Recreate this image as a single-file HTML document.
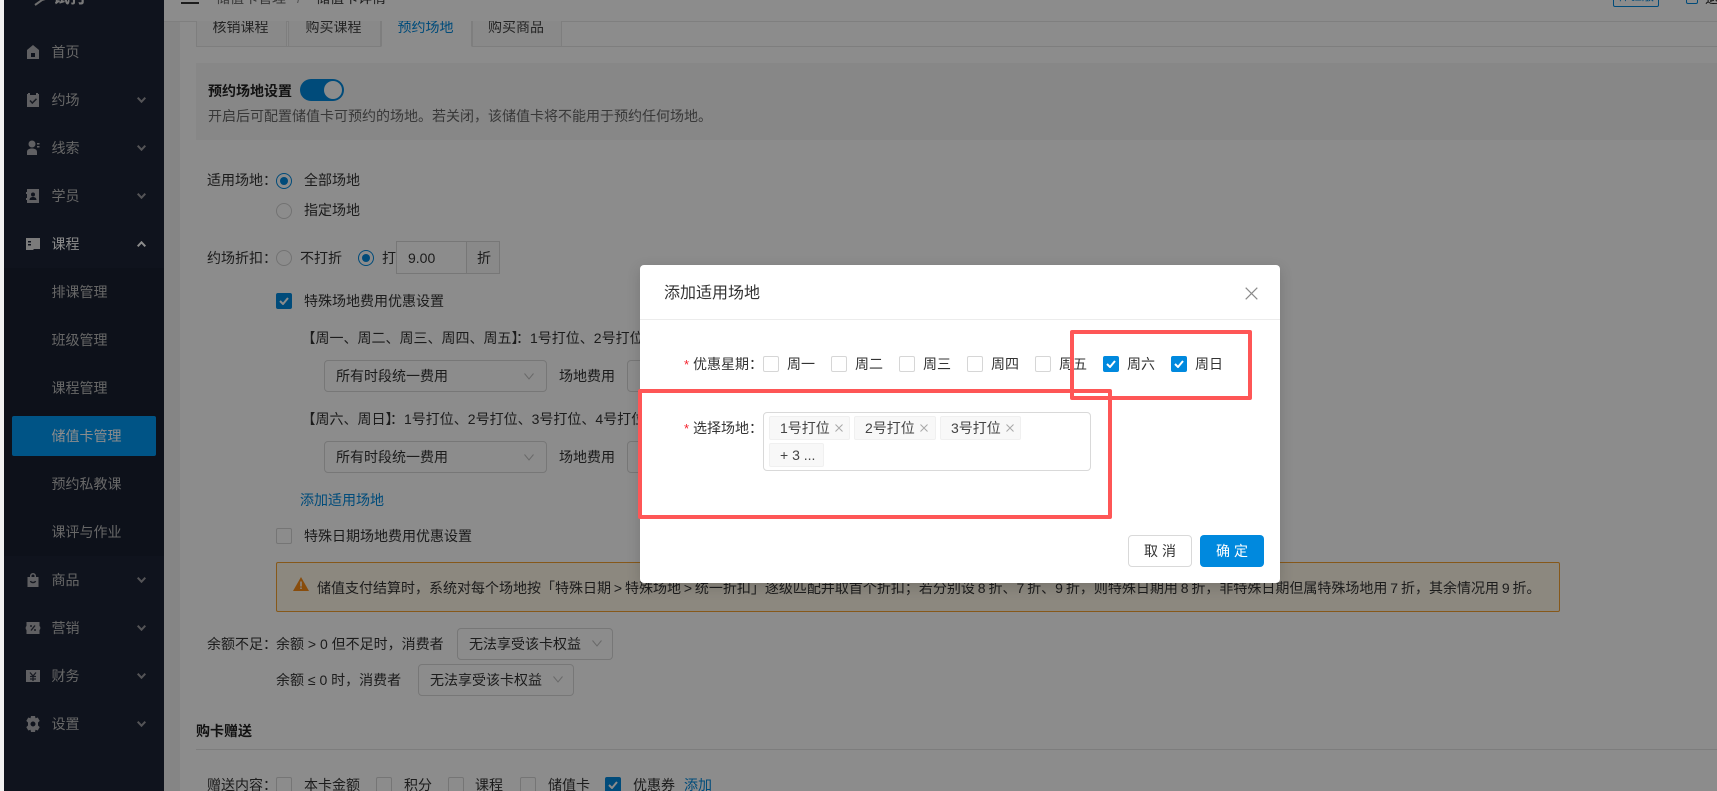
<!DOCTYPE html>
<html lang="zh-CN">
<head>
<meta charset="utf-8">
<title>添加适用场地</title>
<style>
html,body{margin:0;padding:0;width:1717px;height:791px;overflow:hidden;background:#fff}
body{position:relative;font:14px/20px "Liberation Sans","Noto Sans CJK SC",sans-serif;color:#333}
div,span,a,svg{position:absolute;box-sizing:border-box}
.t{white-space:nowrap;height:20px}
.s{position:static}
#side{left:0;top:0;width:164px;height:791px;background:#1d2435}
#sub{left:0;top:268px;width:164px;height:288px;background:#182030}
.m{left:51.5px;color:#bcbcbc;white-space:nowrap;height:20px}
.ic{left:25px;width:16px;height:16px;fill:#b0b0b4}
.ch{left:137px;width:9px;height:6px;fill:none;stroke:#9a9a9e;stroke-width:2}
#gutter{left:164px;top:0;width:16px;height:791px;background:#f2f2f2}
#hdr{left:164px;top:0;width:1553px;height:22px;background:#fff;border-bottom:1px solid #e8e8e8}
.tab{top:21px;height:26px;border:1px solid #e6e6e6;border-top:0;background:#fafafa;text-align:center;line-height:12px;color:#444;overflow:hidden;text-indent:-2px}
.tab.on{background:#fff;border-bottom-color:#fff;color:#0089de}
#tabline{left:196px;top:46px;width:1521px;height:1px;background:#e6e6e6}
#info{left:196px;top:63px;width:1521px;height:77px;background:#f6f6f6}
.sw{left:300px;top:79px;width:44px;height:22px;border-radius:11px;background:#0089de}
.sw i{position:absolute;right:2px;top:2px;width:18px;height:18px;border-radius:50%;background:#fff}
.r{width:16px;height:16px;border-radius:50%;border:1px solid #d0d0d0;background:#fff}
.r.on{border-color:#0089de}
.r.on i{position:absolute;left:3px;top:3px;width:8px;height:8px;border-radius:50%;background:#0089de}
.c{width:16px;height:16px;border-radius:2px;border:1px solid #d6d6d6;background:#fff}
.c.on{background:#0089de;border-color:#0089de}
.c.on svg{left:2px;top:3px;width:10px;height:8px;fill:none;stroke:#fff;stroke-width:2}
.sel{height:32px;border:1px solid #d9d9d9;border-radius:4px;background:#fff}
.sel svg{width:10px;height:7px;fill:none;stroke:#bfbfbf;stroke-width:1}
.lnk{color:#0089de}
#warn{left:276px;top:562px;width:1284px;height:50px;background:#fff7e8;border:1px solid #f5a030;border-radius:2px}
#ov{left:0;top:0;width:1717px;height:791px;background:rgba(0,0,0,.45)}
#strip{left:0;top:0;width:4px;height:791px;background:#f1f1f1}
#modal{left:640px;top:265px;width:640px;height:318px;background:#fff;border-radius:4px;box-shadow:0 4px 14px rgba(0,0,0,.15);color:#333}
#mh{left:0;top:54px;width:640px;height:1px;background:#ececec}
.star{color:#f5222d;font-size:13px}
.tg{height:24px;background:#f8f8f8;border:1px solid #f0f0f0;border-radius:2px;color:#444}
.tg svg{width:8px;height:8px;fill:none;stroke:#a8a8a8;stroke-width:1}
.btn{top:270px;width:64px;height:32px;border-radius:4px;text-align:center;line-height:30px;font-size:14px;letter-spacing:4px;text-indent:4px}
.red{border:4px solid #fe5656;border-radius:2px;z-index:30}
</style>
</head>
<body>

<div id="side"></div>
<div id="sub"></div>

<svg style="left:34px;top:-6px;width:20px;height:12px" viewBox="0 0 20 12"><path d="M1 11 8 6 18 3 13 1 9 6" fill="none" stroke="#c8c8c8" stroke-width="2"/></svg>
<span class="t" style="left:53px;top:-12px;color:#ddd;font-size:17px;font-weight:bold">试打</span>

<svg class="ic" style="top:44px" viewBox="0 0 16 16"><path d="M8 1 14 6v9H2V6zM6 9v4h4V9z" fill-rule="evenodd"/></svg>
<span class="m" style="top:42px">首页</span>

<svg class="ic" style="top:92px" viewBox="0 0 16 16"><path d="M3 1h2v2h6V1h2v1h1v13H2V2h1z"/><path d="M5 8.500 7.300 11 11.500 6.800" fill="none" stroke="#2d3240" stroke-width="1.500"/></svg>
<span class="m" style="top:90px">约场</span>
<svg class="ch" style="top:97px" viewBox="0 0 9 6"><path d="M.7.7 4.500 4.700 8.300.7"/></svg>

<svg class="ic" style="top:140px" viewBox="0 0 16 16"><circle cx="7" cy="4" r="3.500"/><path d="M2 15v-3c0-2.500 2-3.500 5-3.500s5 1 5 3.500v3zM12 3h2.500v1.500H12zM12 6h2.500v1.500H12z"/></svg>
<span class="m" style="top:138px">线索</span>
<svg class="ch" style="top:145px" viewBox="0 0 9 6"><path d="M.7.7 4.500 4.700 8.300.7"/></svg>

<svg class="ic" style="top:188px" viewBox="0 0 16 16"><path d="M2 1h12v14H2v-3H1v-2h1V6H1V4h1zM8 4.500a2 2 0 1 0 0 4 2 2 0 0 0 0-4zM4.500 12h7c0-2-1.500-3-3.500-3s-3.500 1-3.500 3z" fill-rule="evenodd"/></svg>
<span class="m" style="top:186px">学员</span>
<svg class="ch" style="top:193px" viewBox="0 0 9 6"><path d="M.7.7 4.500 4.700 8.300.7"/></svg>

<svg class="ic" style="top:236px;fill:#e0e0e0" viewBox="0 0 16 16"><path d="M1 2h14v11H9l-1 1H1zM3 5v1.500h3V5zM3 8v1.500h3V8z" fill-rule="evenodd"/></svg>
<span class="m" style="top:234px;color:#fff">课程</span>
<svg class="ch" style="top:241px;stroke:#fff" viewBox="0 0 9 6"><path d="M.7 5.300 4.500 1.300 8.300 5.300"/></svg>

<span class="m" style="top:282px">排课管理</span>
<span class="m" style="top:330px">班级管理</span>
<span class="m" style="top:378px">课程管理</span>
<div style="left:12px;top:416px;width:144px;height:40px;background:#0099f5;border-radius:2px"></div>
<span class="m" style="top:426px;color:#fff">储值卡管理</span>
<span class="m" style="top:474px">预约私教课</span>
<span class="m" style="top:522px">课评与作业</span>

<svg class="ic" style="top:572px" viewBox="0 0 16 16"><path d="M5 5V4a3 3 0 0 1 6 0v1h2.500v10h-11V5zM6.500 5h3V4a1.500 1.500 0 0 0-3 0z" fill-rule="evenodd"/><path d="M5.500 9c.5 2 4.500 2 5 0" fill="none" stroke="#2d3240" stroke-width="1.500"/></svg>
<span class="m" style="top:570px">商品</span>
<svg class="ch" style="top:577px" viewBox="0 0 9 6"><path d="M.7.7 4.500 4.700 8.300.7"/></svg>

<svg class="ic" style="top:620px" viewBox="0 0 16 16"><path d="M1.500 2h13v4l.8 1v2l-.8 1v4h-13v-4l-.8-1V7l.8-1z"/><path d="M10 5.500 6 10.500M5 6h2M9 10h2" fill="none" stroke="#2d3240" stroke-width="1.400"/></svg>
<span class="m" style="top:618px">营销</span>
<svg class="ch" style="top:625px" viewBox="0 0 9 6"><path d="M.7.7 4.500 4.700 8.300.7"/></svg>

<svg class="ic" style="top:668px" viewBox="0 0 16 16"><path d="M1 2h14v12H1z"/><path d="M5 4.500 8 8l3-3.500M5 8.500h6M5 11h6M8 8v5" fill="none" stroke="#2d3240" stroke-width="1.300"/></svg>
<span class="m" style="top:666px">财务</span>
<svg class="ch" style="top:673px" viewBox="0 0 9 6"><path d="M.7.7 4.500 4.700 8.300.7"/></svg>

<svg class="ic" style="top:716px" viewBox="0 0 16 16"><path d="M6 0h4l.5 2.300 2.200-.8 2 3.400L13 6.500v3l1.700 1.600-2 3.400-2.200-.8L10 16H6l-.5-2.300-2.200.8-2-3.400L3 9.500v-3L1.300 4.900l2-3.400 2.200.8zM8 5.500a2.500 2.500 0 1 0 0 5 2.500 2.500 0 0 0 0-5z" fill-rule="evenodd"/></svg>
<span class="m" style="top:714px">设置</span>
<svg class="ch" style="top:721px" viewBox="0 0 9 6"><path d="M.7.7 4.500 4.700 8.300.7"/></svg>

<div id="gutter"></div>
<div id="hdr"></div>
<div style="left:181px;top:2px;width:18px;height:2px;background:#333"></div>
<span class="t" style="left:216px;top:-12px;color:#666">储值卡管理</span>
<span class="t" style="left:297px;top:-12px;color:#999">/</span>
<span class="t" style="left:316px;top:-12px;color:#333">储值卡详情</span>
<div style="left:1613px;top:-14px;width:46px;height:21px;border:1px solid #0089de;border-radius:2px;color:#0089de;font-size:12px;line-height:19px;text-align:center;white-space:nowrap;overflow:hidden">体验版</div>
<div style="left:1686px;top:-8px;width:12px;height:12px;border:1px solid #0089de;border-radius:2px"></div>
<span class="t" style="left:1705px;top:-12px;color:#222">退出</span>

<div class="tab" style="left:196px;width:91px">核销课程</div>
<div class="tab" style="left:288px;width:93px">购买课程</div>
<div class="tab on" style="left:381px;width:91px">预约场地</div>
<div class="tab" style="left:472px;width:90px">购买商品</div>
<div id="tabline"></div>
<div class="tab on" style="left:381px;width:91px">预约场地</div>

<div id="info"></div>
<span class="t" style="left:208px;top:81px;font-weight:bold;color:#222">预约场地设置</span>
<div class="sw"><i></i></div>
<span class="t" style="left:208px;top:106px;color:#666">开启后可配置储值卡可预约的场地。若关闭，该储值卡将不能用于预约任何场地。</span>

<span class="t" style="left:207px;top:170px">适用场地：</span>
<div class="r on" style="left:276px;top:173px"><i></i></div>
<span class="t" style="left:304px;top:170px">全部场地</span>
<div class="r" style="left:276px;top:203px"></div>
<span class="t" style="left:304px;top:200px">指定场地</span>

<span class="t" style="left:207px;top:248px">约场折扣：</span>
<div class="r" style="left:276px;top:250px"></div>
<span class="t" style="left:300px;top:248px">不打折</span>
<div class="r on" style="left:358px;top:250px"><i></i></div>
<span class="t" style="left:382px;top:248px">打</span>
<div style="left:396px;top:241px;width:104px;height:33px;border:1px solid #d9d9d9;background:#fff"></div>
<div style="left:466px;top:242px;width:33px;height:31px;background:#fafafa;border-left:1px solid #d9d9d9"></div>
<span class="t" style="left:408px;top:248px">9.00</span>
<span class="t" style="left:477px;top:248px">折</span>

<div class="c on" style="left:276px;top:293px"><svg viewBox="0 0 10 8"><path d="M1 4 4 7 9 1"/></svg></div>
<span class="t" style="left:304px;top:291px">特殊场地费用优惠设置</span>

<span class="t" style="left:301.500px;top:328px">【周一、周二、周三、周四、周五<span class="s" style="letter-spacing:-2.500px">】</span>：1号打位、2号打位</span>
<div class="sel" style="left:324px;top:360px;width:223px"><svg style="left:199px;top:12px" viewBox="0 0 10 7"><path d="M.5.5 5 6 9.500.5"/></svg></div>
<span class="t" style="left:336px;top:366px">所有时段统一费用</span>
<span class="t" style="left:559px;top:366px">场地费用</span>
<div class="sel" style="left:627px;top:360px;width:180px"></div>

<span class="t" style="left:301.500px;top:409px">【周六、周日<span class="s" style="letter-spacing:-2.500px">】</span>：1号打位、2号打位、3号打位、4号打位</span>
<div class="sel" style="left:324px;top:441px;width:223px"><svg style="left:199px;top:12px" viewBox="0 0 10 7"><path d="M.5.5 5 6 9.500.5"/></svg></div>
<span class="t" style="left:336px;top:447px">所有时段统一费用</span>
<span class="t" style="left:559px;top:447px">场地费用</span>
<div class="sel" style="left:627px;top:441px;width:180px"></div>

<span class="t lnk" style="left:300px;top:490px">添加适用场地</span>
<div class="c" style="left:276px;top:528px"></div>
<span class="t" style="left:304px;top:526px">特殊日期场地费用优惠设置</span>

<div id="warn"></div>
<svg style="left:293px;top:577px;width:16px;height:14px" viewBox="0 0 16 14"><path d="M8 0 16 14H0z" fill="#fa8c16"/><path d="M8 4.500v5M8 10.500v1.500" stroke="#fff" stroke-width="1.500"/></svg>
<span class="t" style="left:317px;top:578px;word-spacing:-1px">储值支付结算时，系统对每个场地按「特殊日期 &gt; 特殊场地 &gt; 统一折扣」逐级匹配并取首个折扣；若分别设 8 折、7 折、9 折，则特殊日期用 8 折，非特殊日期但属特殊场地用 7 折，其余情况用 9 折。</span>

<span class="t" style="left:207px;top:634px">余额不足：</span>
<span class="t" style="left:276px;top:634px">余额 &gt; 0 但不足时，消费者</span>
<div class="sel" style="left:457px;top:628px;width:156px"><svg style="left:134px;top:11px" viewBox="0 0 10 7"><path d="M.5.5 5 6 9.500.5"/></svg></div>
<span class="t" style="left:469px;top:634px">无法享受该卡权益</span>
<span class="t" style="left:276px;top:670px">余额 ≤ 0 时，消费者</span>
<div class="sel" style="left:418px;top:664px;width:156px"><svg style="left:134px;top:11px" viewBox="0 0 10 7"><path d="M.5.5 5 6 9.500.5"/></svg></div>
<span class="t" style="left:430px;top:670px">无法享受该卡权益</span>

<span class="t" style="left:196px;top:721px;font-weight:bold;color:#222">购卡赠送</span>
<div style="left:196px;top:749px;width:1521px;height:1px;background:#e4e4e4"></div>

<span class="t" style="left:207px;top:775px">赠送内容：</span>
<div class="c" style="left:276px;top:777px"></div><span class="t" style="left:304px;top:775px">本卡金额</span>
<div class="c" style="left:376px;top:777px"></div><span class="t" style="left:404px;top:775px">积分</span>
<div class="c" style="left:448px;top:777px"></div><span class="t" style="left:475px;top:775px">课程</span>
<div class="c" style="left:520px;top:777px"></div><span class="t" style="left:548px;top:775px">储值卡</span>
<div class="c on" style="left:605px;top:777px"><svg viewBox="0 0 10 8"><path d="M1 4 4 7 9 1"/></svg></div><span class="t" style="left:633px;top:775px">优惠券</span>
<span class="t lnk" style="left:684px;top:775px">添加</span>

<div id="ov"></div>
<div id="strip"></div>

<div id="modal">
  <span class="t" style="left:24px;top:19px;font-size:16px;line-height:20px;color:#333">添加适用场地</span>
  <svg style="left:605px;top:22px;width:13px;height:13px" viewBox="0 0 13 13"><path d="M.7.7 12.300 12.300M12.300.7.7 12.300" stroke="#8a8a8a" stroke-width="1.200" fill="none"/></svg>
  <div id="mh"></div>

  <span class="t star" style="left:44px;top:90px">*</span>
  <span class="t" style="left:53px;top:89px">优惠星期：</span>
  <div class="c" style="left:123px;top:91px"></div><span class="t" style="left:147px;top:89px">周一</span>
  <div class="c" style="left:191px;top:91px"></div><span class="t" style="left:215px;top:89px">周二</span>
  <div class="c" style="left:259px;top:91px"></div><span class="t" style="left:283px;top:89px">周三</span>
  <div class="c" style="left:327px;top:91px"></div><span class="t" style="left:351px;top:89px">周四</span>
  <div class="c" style="left:395px;top:91px"></div><span class="t" style="left:419px;top:89px">周五</span>
  <div class="c on" style="left:463px;top:91px"><svg viewBox="0 0 10 8"><path d="M1 4 4 7 9 1"/></svg></div><span class="t" style="left:487px;top:89px">周六</span>
  <div class="c on" style="left:531px;top:91px"><svg viewBox="0 0 10 8"><path d="M1 4 4 7 9 1"/></svg></div><span class="t" style="left:555px;top:89px">周日</span>

  <span class="t star" style="left:44px;top:154px">*</span>
  <span class="t" style="left:53px;top:153px">选择场地：</span>
  <div style="left:123px;top:147px;width:328px;height:59px;border:1px solid #d9d9d9;border-radius:4px"></div>
  <div class="tg" style="left:129px;top:151px;width:81px"><span class="t" style="left:10px;top:1px">1号打位</span><svg style="left:65px;top:7px" viewBox="0 0 8 8"><path d="M.5.5 7.500 7.500M7.500.5.5 7.500"/></svg></div>
  <div class="tg" style="left:214px;top:151px;width:82px"><span class="t" style="left:10px;top:1px">2号打位</span><svg style="left:65px;top:7px" viewBox="0 0 8 8"><path d="M.5.5 7.500 7.500M7.500.5.5 7.500"/></svg></div>
  <div class="tg" style="left:300px;top:151px;width:81px"><span class="t" style="left:10px;top:1px">3号打位</span><svg style="left:65px;top:7px" viewBox="0 0 8 8"><path d="M.5.5 7.500 7.500M7.500.5.5 7.500"/></svg></div>
  <div class="tg" style="left:129px;top:178px;width:55px"><span class="t" style="left:10px;top:1px">+ 3 ...</span></div>

  <div class="btn" style="left:488px;border:1px solid #d9d9d9;background:#fff;color:#333">取消</div>
  <div class="btn" style="left:560px;background:#0089de;color:#fff;line-height:32px">确定</div>
</div>

<div class="red" style="left:1070px;top:330px;width:182px;height:70px"></div>
<div class="red" style="left:638px;top:389px;width:474px;height:130px"></div>

</body>
</html>
